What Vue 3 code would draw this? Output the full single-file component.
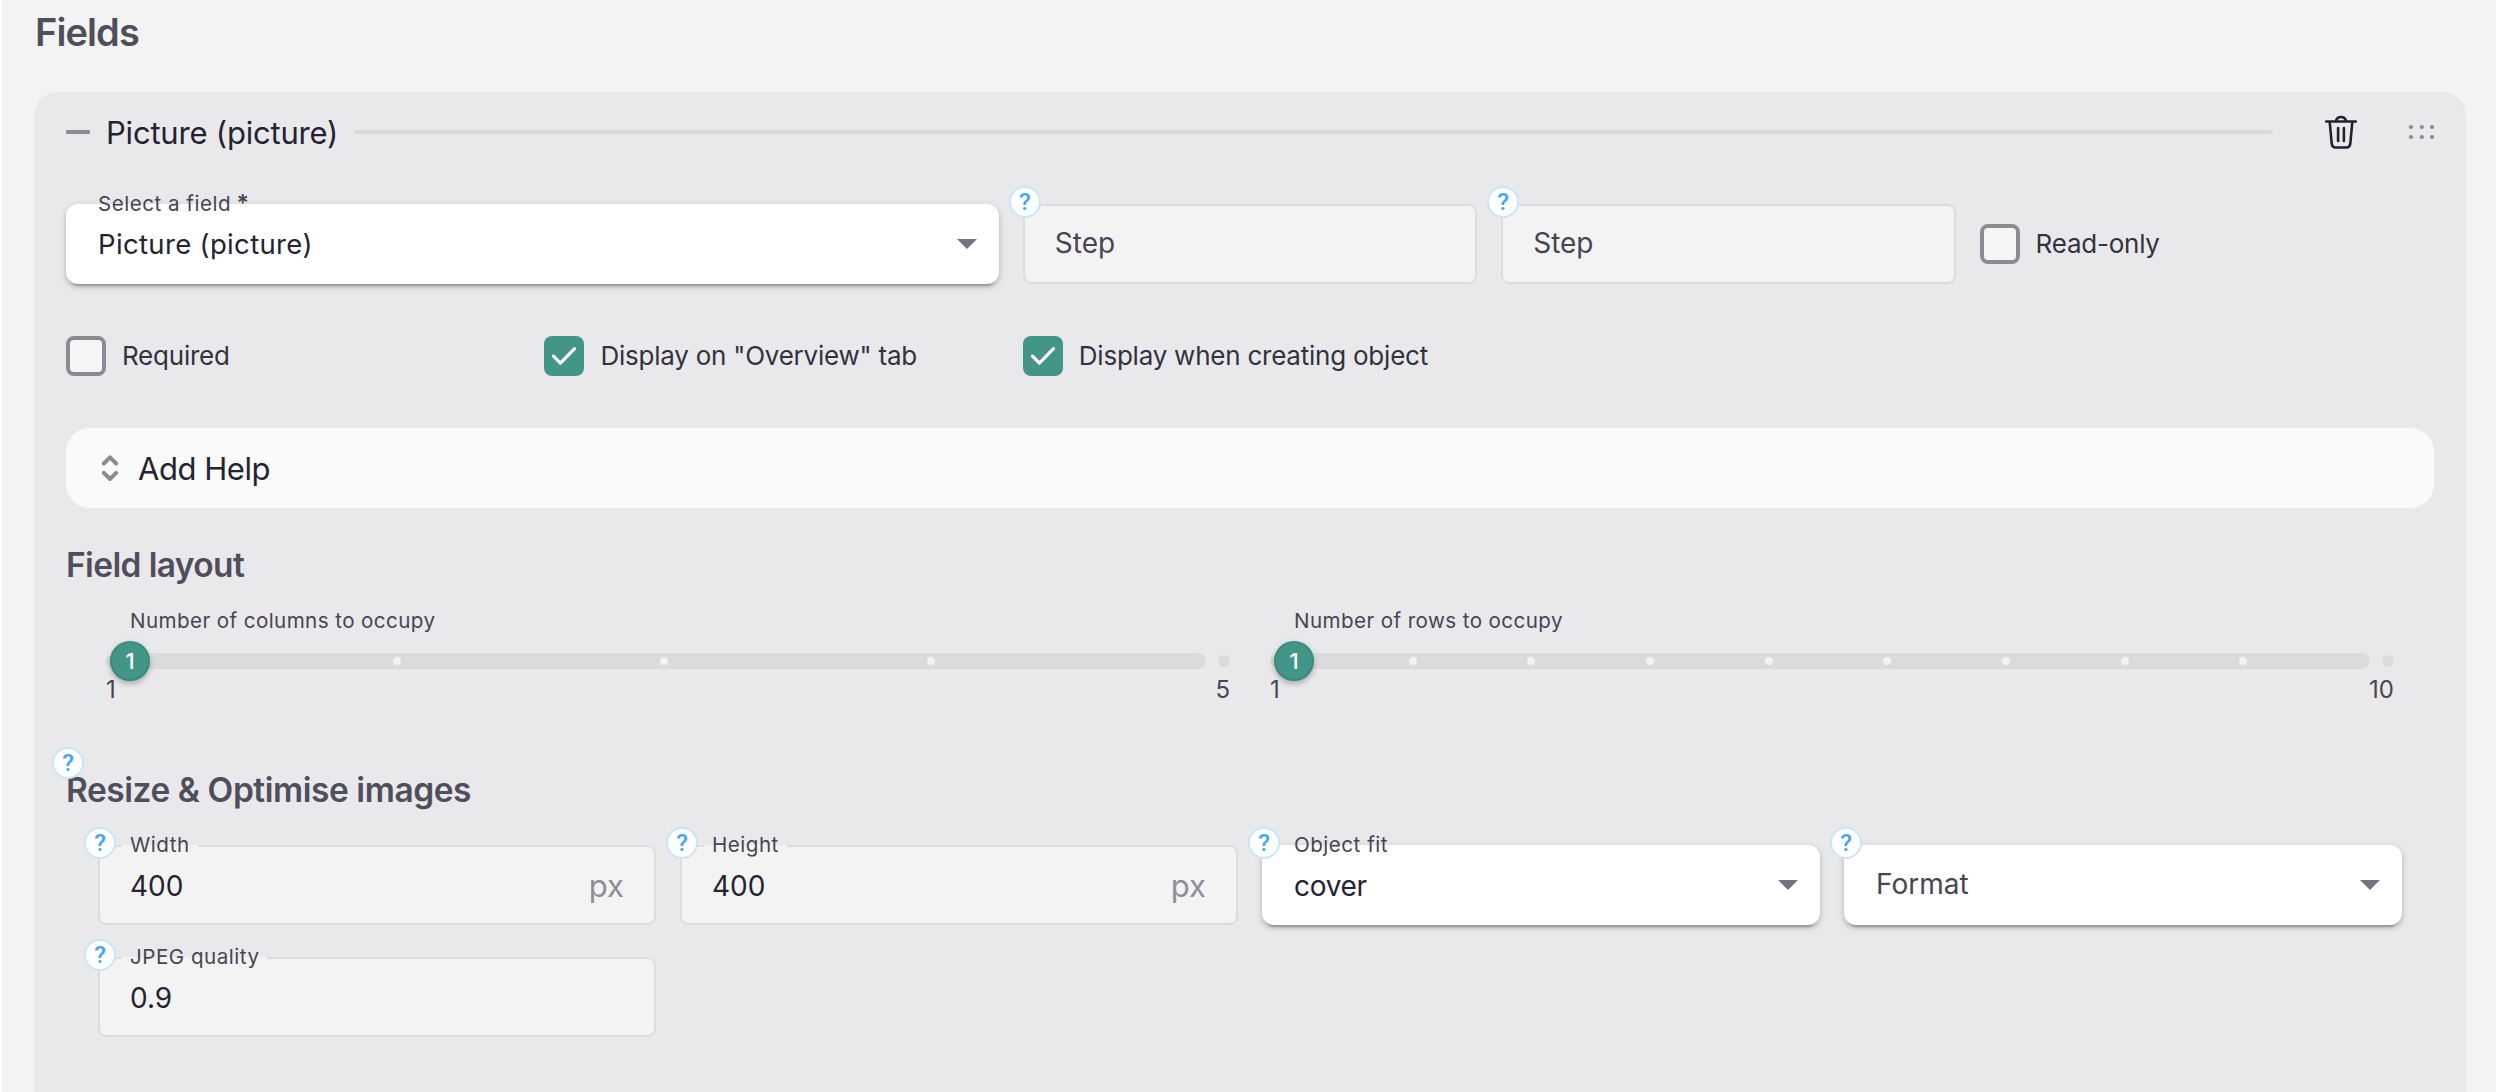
<script setup>
const overview = [
  { label: 'Required', checked: false },
  { label: 'Display on "Overview" tab', checked: true },
  { label: 'Display when creating object', checked: true },
]
const sliders = [
  { label: 'Number of columns to occupy', min: 1, max: 5, value: 1 },
  { label: 'Number of rows to occupy', min: 1, max: 10, value: 1 },
]
const stops = (s) =>
  Array.from({ length: s.max - s.min - 1 }, (_, i) => ((i + 1) / (s.max - s.min)) * 100)
const imageFields = [
  { label: 'Width', value: '400', suffix: 'px' },
  { label: 'Height', value: '400', suffix: 'px' },
  { label: 'Object fit', value: 'cover', select: true },
  { label: 'Format', select: true },
  { label: 'JPEG quality', value: '0.9' },
]
</script>

<template>
  <main class="page">
    <h1 class="page-title">Fields</h1>
    <section class="panel">
      <header class="head">
        <span class="dash"></span>
        <span class="title">Picture (picture)</span>
        <span class="rule"></span>
        <svg class="trash" width="40" height="40" viewBox="0 0 40 40" fill="none" stroke="#23212f" stroke-width="2.600" stroke-linecap="round" stroke-linejoin="round">
          <path d="M5.200 9.500H34.800M15 9c.6-2.800 2.500-4 5-4s4.400 1.200 5 4M8.700 10l2 21.500c.3 2.500 1.600 4 4 4h10.600c2.400 0 3.700-1.500 4-4l2-21.500M17.100 16v13M22.900 16v13" />
        </svg>
        <svg class="grip" width="26" height="16" viewBox="0 0 26 16" fill="#8b8b94">
          <circle cx="3" cy="3" r="2.100" /><circle cx="13.800" cy="3" r="2.100" /><circle cx="24" cy="3" r="2.100" />
          <circle cx="3" cy="13" r="2.100" /><circle cx="13.800" cy="13" r="2.100" /><circle cx="24" cy="13" r="2.100" />
        </svg>
      </header>

      <div class="grid5">
        <div class="field select wide">
          <span class="label">Select a field <b>*</b></span>
          <span class="value long">Picture (picture)</span>
          <i class="arrow"></i>
        </div>
        <div v-for="n in 2" :key="n" class="field outlined">
          <span class="placeholder">Step</span>
          <span class="help">?</span>
        </div>
        <label class="check"><span class="box"></span>Read-only</label>
      </div>

      <div class="grid5 second">
        <label v-for="c in overview" :key="c.label" class="check">
          <span class="box" :class="{ on: c.checked }">
            <svg v-if="c.checked" width="40" height="40" viewBox="0 0 40 40" fill="none" stroke="#fff" stroke-width="3.200" stroke-linecap="round" stroke-linejoin="round"><path d="M9.500 20.200l6.900 7L30.500 12.700" /></svg>
          </span>{{ c.label }}
        </label>
      </div>

      <div class="add-help">
        <svg width="24" height="32" viewBox="0 0 24 32" fill="none" stroke="#8b8b94" stroke-width="4" stroke-linecap="round" stroke-linejoin="round"><path d="M5.800 11.500L12 5.300l6.200 6.200M5.800 20.800L12 27l6.200-6.200" /></svg>
        <span>Add Help</span>
      </div>

      <h2 class="sub layout">Field layout</h2>
      <div class="sliders">
        <div v-for="s in sliders" :key="s.label" class="slider">
          <div class="slabel">{{ s.label }}</div>
          <div class="bar">
            <span class="cap"></span>
            <span class="track">
              <span class="stops"><i v-for="p in stops(s)" :key="p" :style="{ left: p + '%' }"></i></span>
              <b class="thumb">{{ s.value }}</b>
            </span>
            <span class="cap"></span>
          </div>
          <div class="range"><span>{{ s.min }}</span><span>{{ s.max }}</span></div>
        </div>
      </div>

      <h2 class="sub resize">Resize &amp; Optimise images<span class="help">?</span></h2>
      <div class="grid4">
        <div v-for="f in imageFields" :key="f.label" class="field" :class="f.select ? 'select' : 'outlined'">
          <span v-if="f.value" class="label">{{ f.label }}</span>
          <span v-if="f.value" class="value">{{ f.value }}</span>
          <span v-else class="placeholder">{{ f.label }}</span>
          <span v-if="f.suffix" class="suffix">{{ f.suffix }}</span>
          <i v-if="f.select" class="arrow"></i>
          <span class="help">?</span>
        </div>
      </div>
    </section>
  </main>
</template>

<style>
body { background: #f3f3f3; }
</style>

<style scoped>
* { box-sizing: border-box; }
.page { width: 2496px; height: 1092px; overflow: hidden; border-left: 2px solid #fff; background: #f3f3f3; padding: 9px 30px 0 32px; font-family: Inter, "Liberation Sans", sans-serif; color: #252333; }
.page-title { margin: 0 0 37px 1px; font-size: 38px; line-height: 46px; font-weight: 600; letter-spacing: -.9px; color: #504e5c; }
.panel { height: 1100px; padding: 0 32px; border-radius: 24px; background: #e9e9eb; }
.head { display: flex; align-items: center; height: 80px; }
.dash { width: 24px; height: 4px; border-radius: 1px; background: #8b8b94; }
.title { margin: 1px 16px 0; font-size: 31px; line-height: 40px; letter-spacing: -.2px; white-space: nowrap; }
.rule { flex: 1; height: 4px; border-radius: 2px; background: #dadadc; }
.trash { margin-left: 48px; }
.grip { margin-left: 47px; }
.grid5 { display: grid; grid-template-columns: repeat(5, 1fr); column-gap: 24px; margin-top: 32px; align-items: center; }
.second { margin-top: 52px; }
.wide { grid-column: span 2; }
.field { position: relative; display: flex; align-items: center; height: 80px; padding: 0 32px; font-size: 28px; }
.select { border-radius: 12px; background: #fff; box-shadow: 0 6px 2px -4px rgba(0,0,0,.2), 0 3px 4px rgba(0,0,0,.14), 0 2px 8px rgba(0,0,0,.12); }
.outlined { border-radius: 8px; background: #f3f3f3; box-shadow: inset 0 0 0 2px #dcdcde; }
.label { position: absolute; left: 24px; top: -13px; padding: 0 8px; font-size: 20.600px; line-height: 26px; letter-spacing: .5px; color: #474553; white-space: nowrap; }
.outlined .label { background: linear-gradient(#f3f3f3, #f3f3f3) 0 13px / 100% 2px no-repeat; }
.label b { margin-left: -1px; font-size: 23px; line-height: 20px; font-weight: 600; }
.value { line-height: 40px; }
.long { font-size: 27.500px; letter-spacing: .34px; }
.select .value:not(.long) { padding-top: 1px; letter-spacing: -.3px; }
.outlined .value { padding-top: 2px; }
.placeholder { padding-bottom: 2px; line-height: 40px; color: #474553; }
.suffix { margin-left: auto; font-size: 31px; color: #8f8e98; }
.arrow { position: absolute; right: 22px; top: 35px; border: 10px solid transparent; border-top-color: #74747f; border-bottom: 0; }
.help { position: absolute; left: -14px; top: -18px; width: 32px; height: 32px; border: 2px solid #c8e6f8; border-radius: 50%; background: #fff; color: #42a5f5; font: 500 24px/29px Roboto, sans-serif; text-align: center; letter-spacing: 0; }
.check { display: flex; align-items: center; gap: 16px; font-size: 26px; line-height: 40px; letter-spacing: -.23px; color: #33323f; white-space: nowrap; }
.box { width: 40px; height: 40px; border: 4px solid #8b8b94; border-radius: 8px; background: #f6f6f6; }
.box.on { border: 0; background: #439587; }
.box svg { display: block; }
.add-help { display: flex; align-items: center; gap: 16px; height: 80px; margin-top: 52px; padding: 0 32px; border-radius: 24px; background: #fafafa; font-size: 31px; letter-spacing: -.45px; }
.sub { position: relative; margin: 36px 0 0; font-size: 33.500px; line-height: 42px; font-weight: 600; color: #504e5c; }
.layout { letter-spacing: -.62px; }
.resize { margin-top: 71px; letter-spacing: -.45px; }
.resize .help { top: -22px; }
.sliders { display: grid; grid-template-columns: 1fr 1fr; column-gap: 24px; margin: 21px 32px 0; }
.slabel { margin: 0 0 6px 32px; font-size: 20.600px; line-height: 28px; letter-spacing: .41px; color: #474553; }
.bar { display: flex; align-items: center; height: 40px; padding: 0 8px; }
.cap { width: 12px; height: 12px; border-radius: 50%; background: #dbdbdd; }
.track { position: relative; flex: 1; height: 16px; margin: 0 12px 0 4px; border-radius: 8px; background: #dbdbdd; }
.stops { position: absolute; left: 8px; right: 8px; top: 4px; height: 8px; }
.stops i { position: absolute; width: 8px; height: 8px; margin-left: -4px; border-radius: 50%; background: #f3f3f4; }
.thumb { position: absolute; left: -12px; top: -12px; width: 40px; height: 40px; border-radius: 50%; background: #439587; color: #fff; font-size: 22px; font-weight: 500; line-height: 40px; text-align: center; box-shadow: inset 0 0 0 2px rgba(0,80,70,.14), 0 3px 4px rgba(0,0,0,.18), 0 2px 8px rgba(0,0,0,.1); }
.range { display: flex; justify-content: space-between; padding: 0 8px; font-size: 24px; line-height: 18px; color: #474553; }
.resize { margin-top: 70px; }
.grid4 { display: grid; grid-template-columns: repeat(4, 1fr); gap: 32px 24px; margin: 34px 32px 0; }
</style>
